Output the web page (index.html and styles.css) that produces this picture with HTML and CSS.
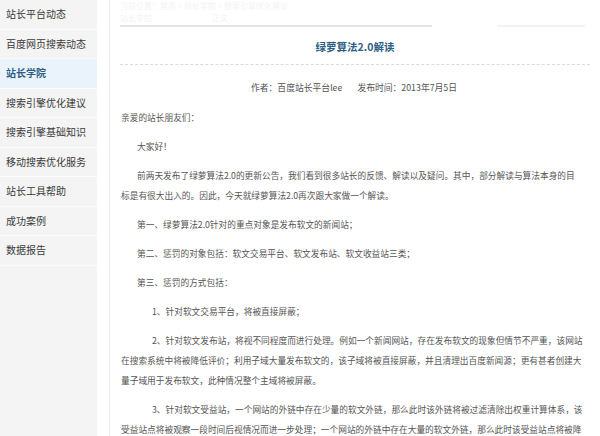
FILE: index.html
```html
<!DOCTYPE html>
<html>
<head>
<meta charset="utf-8">
<title>绿萝算法2.0解读</title>
<link rel="stylesheet" href="styles.css">
</head>
<body>
<div class="page">
  <nav class="side">
    <a class="item">站长平台动态</a>
    <a class="item">百度网页搜索动态</a>
    <a class="item active">站长学院</a>
    <a class="item">搜索引擎优化建议</a>
    <a class="item">搜索引擎基础知识</a>
    <a class="item">移动搜索优化服务</a>
    <a class="item">站长工具帮助</a>
    <a class="item">成功案例</a>
    <a class="item">数据报告</a>
  </nav>
  <main class="main">
    <div class="crumbs">
      <div class="crumb-row">当前位置：首页 &gt; 站长学院 &gt; 搜索引擎优化建议</div>
      <div class="crumb-row"><span>站长学院</span><span class="crumb-gap">正文</span></div>
    </div>
    <div class="rules"><span class="rule rule-a"></span><span class="rule rule-b"></span></div>
    <h1 class="title">绿萝算法2.0解读</h1>
    <div class="meta"><span>作者：百度站长平台lee</span><span>发布时间：2013年7月5日</span></div>
    <div class="article">
      <p>亲爱的站长朋友们：</p>
      <p class="in1">大家好！</p>
      <p class="in1">前两天发布了绿萝算法2.0的更新公告，我们看到很多站长的反馈、解读以及疑问。其中，部分解读与算法本身的目<br>标是有很大出入的。因此，今天就绿萝算法2.0再次跟大家做一个解读。</p>
      <p class="in1">第一、绿萝算法2.0针对的重点对象是发布软文的新闻站；</p>
      <p class="in1">第二、惩罚的对象包括：软文交易平台、软文发布站、软文收益站三类；</p>
      <p class="in1">第三、惩罚的方式包括：</p>
      <p class="in2">1、针对软文交易平台，将被直接屏蔽；</p>
      <p class="in2">2、针对软文发布站，将视不同程度而进行处理。例如一个新闻网站，存在发布软文的现象但情节不严重，该网站<br>在搜索系统中将被降低评价；利用子域大量发布软文的，该子域将被直接屏蔽，并且清理出百度新闻源；更有甚者创建大<br>量子域用于发布软文，此种情况整个主域将被屏蔽。</p>
      <p class="in2">3、针对软文受益站，一个网站的外链中存在少量的软文外链，那么此时该外链将被过滤清除出权重计算体系，该<br>受益站点将被观察一段时间后视情况而进一步处理；一个网站的外链中存在大量的软文外链，那么此时该受益站点将被降<br>低评价或直接屏蔽。</p>
    </div>
  </main>
</div>
</body>
</html>
```

FILE: styles.css
```css
html, body {
  margin: 0;
  padding: 0;
  height: 100%;
  overflow: hidden;
  background: #fff;
}

body {
  font-family: "Noto Sans CJK SC", "Noto Sans", sans-serif;
  color: #555;
}

.page {
  display: flex;
  height: 436px;
}

.side {
  flex: none;
  width: 97px;
  background: #f4f4f4;
}

.item {
  display: block;
  height: 28.5px;
  line-height: 28.5px;
  border-bottom: 1px solid #fbfbfb;
  padding-left: 6px;
  font-size: 10px;
  color: #3a3a3a;
  white-space: nowrap;
}

.item.active {
  background: #eaf3fb;
  color: #2d5f86;
  font-weight: bold;
}

.main {
  flex: 1;
  margin-left: 12px;
  border-left: 1px solid #ececec;
  padding: 0 13px 0 11px;
  min-width: 0;
}

.crumbs {
  height: 25px;
  margin-left: -1px;
}

.crumb-row {
  font-size: 8px;
  line-height: 12px;
  color: #f3f3f3;
  white-space: nowrap;
}

.crumb-gap {
  margin-left: 60px;
}

.rules {
  display: flex;
  height: 2px;
  margin-left: -1px;
}

.rule {
  display: block;
  height: 2px;
}

.rule-a {
  width: 312px;
  background: #e4e4e4;
}

.rule-b {
  width: 88px;
  margin-left: 65px;
  background: #f2f2f2;
}

.title {
  margin: 0 -3px 0 -1px;
  padding-top: 2px;
  line-height: 35px;
  font-size: 10.5px;
  font-weight: bold;
  color: #2d5f86;
  text-align: center;
  border-bottom: 1px dashed #dadada;
}

.meta {
  display: flex;
  justify-content: center;
  gap: 15px;
  padding-top: 16px;
  line-height: 14px;
  font-size: 8.8px;
  color: #555;
}

.article {
  margin-top: 13px;
  font-size: 8.7px;
  line-height: 20px;
  color: #555;
}

.article p {
  margin: 0 0 9px;
  white-space: nowrap;
}

.in1 {
  text-indent: 16px;
}

.in2 {
  text-indent: 31px;
}
```
